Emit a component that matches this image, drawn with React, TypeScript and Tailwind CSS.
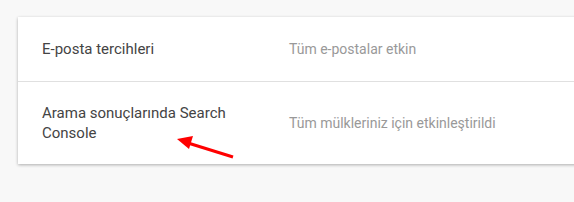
export default function App() {
  return (
    <div className="relative h-[202px] w-[574px] overflow-hidden bg-[#f8f8f8] pt-[17px] pl-[18px] font-['Roboto',sans-serif] text-[14px]">
      <div className="w-[620px] bg-white shadow-[0_1px_3px_rgba(0,0,0,0.3)]">
        <div className="flex h-[65px] items-center border-b border-[#e0e0e0]">
          <div className="w-[271px] pl-6 pr-9 text-[15px] text-[#444444]">E-posta tercihleri</div>
          <div className="text-[#999999]">Tüm e-postalar etkin</div>
        </div>
        <div className="flex h-[82px] items-center">
          <div className="w-[271px] pl-6 pr-9 text-[15px] leading-5 text-[#444444]">Arama sonuçlarında Search Console</div>
          <div className="text-[#999999]">Tüm mülkleriniz için etkinleştirildi</div>
        </div>
      </div>
      <svg className="absolute left-0 top-0" width="574" height="202">
        <line x1="233" y1="157" x2="188" y2="143" stroke="#ff0000" strokeWidth="3" />
        <polygon points="177,139 193,136 189,149" fill="#ff0000" />
      </svg>
    </div>
  );
}
